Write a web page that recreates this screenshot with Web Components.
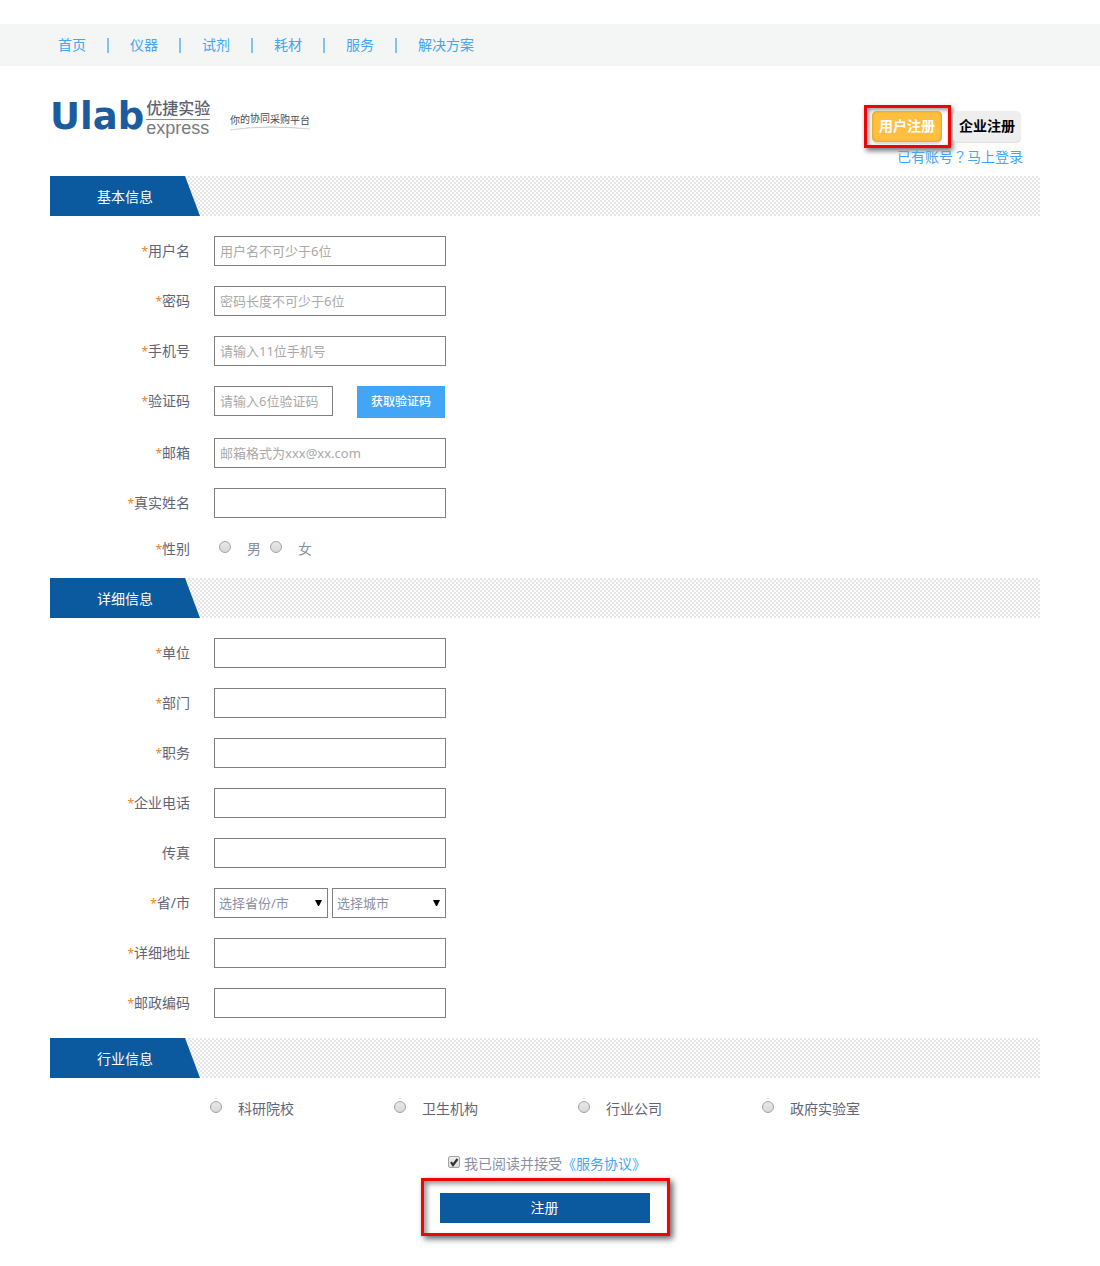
<!DOCTYPE html>
<html lang="zh-CN">
<head>
<meta charset="utf-8">
<meta name="viewport" content="width=device-width, initial-scale=1">
<title>用户注册</title>
<style>
  body { margin: 0; background: #fff; color: #5f6577; font: 14px/20px "Noto Sans", "Noto Sans CJK SC", sans-serif; }
</style>
</head>
<body>
<register-page></register-page>
<script>
const define = (name, html) => customElements.define(name, class extends HTMLElement {
  connectedCallback() {
    if (this.shadowRoot) return;
    const root = this.attachShadow({ mode: "open" });
    root.innerHTML = typeof html === "function" ? html(this) : html;
  }
});

define("site-nav", `
<style>
  :host { display: block; background: #f4f5f5; }
  nav { display: flex; padding: 0 50px; height: 42px; align-items: center; }
  a { color: #42a5f5; text-decoration: none; padding: 0 8px; }
  a + a { display: flex; align-items: center; padding-left: 0; }
  a + a::before { content: ""; width: 2px; height: 15px; margin: 0 21px 0 13px; background: #80c1f8; }
</style>
<nav><a href="#">首页</a><a href="#">仪器</a><a href="#">试剂</a><a href="#">耗材</a><a href="#">服务</a><a href="#">解决方案</a></nav>`);

define("brand-logo", `
<style>
  :host { display: flex; align-items: flex-start; }
  .main { color: #1c5c9e; font: bold 37px/32px "DejaVu Sans", sans-serif; }
  .sub { display: flex; flex-direction: column; color: #5a6270; margin-left: 2px; }
  .cn { font: 500 16px/16px "Liberation Sans", "Noto Sans CJK SC", sans-serif; padding-bottom: 2px; border-bottom: 1px solid #8b9097; }
  .en { font: 18px/16px "Liberation Sans", sans-serif; color: #777b80; }
  svg { margin-left: 20px; }
</style>
<span class="main">Ulab</span>
<span class="sub"><span class="cn">优捷实验</span><span class="en">express</span></span>
<svg width="86" height="34" viewBox="0 0 86 34">
  <text y="23" dy="0 -1 -1 0 1 0 1 0" font-size="10" fill="#444b55">你的协同采购平台</text>
  <path d="M0 29Q36 23 80 28Q36 24 0 29Z" fill="#aaa" stroke="#ccc" stroke-width=".5"/>
</svg>`);

define("account-tabs", `
<style>
  :host { display: flex; flex-direction: column; align-items: flex-end; }
  .tabs { display: flex; align-items: center; }
  .mark { border: 3px solid #f00505; padding: 3px; box-shadow: 2px 3px 5px #0008, inset 2px 2px 4px #0006; }
  button { display: block; width: 70px; height: 31px; padding: 0 0 2px; border: 0; border-radius: 5px; font: bold 14px/29px "Noto Sans", "Noto Sans CJK SC", sans-serif; }
  .on { margin: 0 3px 0 2px; color: #fff; background: #ffc040; box-shadow: inset 0 0 3px #c98b10, 0 2px 1px #ddd; }
  .off { width: 68px; margin-left: 2px; color: #000; background: #eee; box-shadow: 0 1px 1px #ddd; }
  a { color: #42a5f5; text-decoration: none; margin-right: -2px; line-height: 16px; }
  .mid { font-family: "Noto Sans CJK TC", sans-serif; }
</style>
<div class="tabs"><div class="mark"><button class="on" type="button">用户注册</button></div><button class="off" type="button">企业注册</button></div>
<a href="#">已有账号<span class="mid" lang="zh-TW">？</span>马上登录</a>`);

define("form-section", el => `
<style>
  :host { display: block; }
  h2 { margin: 0; height: 40px; font: inherit; color: #fff; background: repeating-conic-gradient(#e6e6e6 0 25%, #fff 0 50%) 0 0 / 4px 4px; }
  h2 span { display: block; width: 150px; line-height: 42px; height: 40px; text-align: center; background: #0b5a9f; clip-path: polygon(0 0, 135px 0, 100% 100%, 0 100%); }
  .body { display: flex; flex-direction: column; gap: 20px; padding: 20px 0; }
</style>
<h2><span>${el.getAttribute("heading")}</span></h2>
<div class="body"><slot></slot></div>`);

const radioCss = `
  input[type=radio] { appearance: none; flex: none; width: 12px; height: 12px; margin: 3px 0 0; border: 1px solid #a3a3a3; border-radius: 50%; background: linear-gradient(#e8e8e8, #d8d8d8); }
  input[type=radio]:checked { background: radial-gradient(#444 35%, #ddd 40%); }`;

const rowCss = `
  :host { display: flex; gap: 24px; }
  .name { width: 140px; line-height: 30px; text-align: right; flex: none; }
  .name i { font-style: normal; font-size: 12px; line-height: 1; color: #f08326; }
  input:not([type=radio]), select { box-sizing: border-box; width: 232px; height: 30px; border: 1px solid #808080; border-radius: 0; background: #fff; color: #8a8fa5; padding: 0 5px; margin: 0; font: 13px/20px "Noto Sans", "Noto Sans CJK SC", sans-serif; outline: 0; }
  ::placeholder { color: #a9a9a9; opacity: 1; }`;
const star = el => el.hasAttribute("optional") ? "" : "<i>*</i>";

define("text-field", el => `
<style>${rowCss}
  .line { display: flex; gap: 24px; }
  .short input { width: 119px; }
  button { width: 88px; height: 32px; padding: 0; border: 0; color: #fff; background: #42a5f5; font: 500 12px/32px "Noto Sans", "Noto Sans CJK SC", sans-serif; }
</style>
<label class="name" for="f">${star(el)}${el.getAttribute("label")}</label>
<div class="line${el.hasAttribute("code") ? " short" : ""}"><input id="f" type="${el.getAttribute("type") || "text"}" placeholder="${el.getAttribute("hint") || ""}">${el.hasAttribute("code") ? '<button type="button">获取验证码</button>' : ""}</div>`);

define("region-field", `
<style>${rowCss}
  .line { display: flex; gap: 4px; }
  select { appearance: none; width: 114px; padding-left: 4px; }
  .pick { display: grid; }
  .pick > * { grid-area: 1 / 1; }
  svg { justify-self: end; align-self: center; margin-right: 6px; pointer-events: none; }
</style>
<label class="name" for="p"><i>*</i>省/市</label>
<div class="line">
  <div class="pick"><select id="p"><option>选择省份/市</option></select><svg width="7" height="6"><path d="M0 0H7L4 6H3Z"/></svg></div>
  <div class="pick"><select aria-label="城市"><option>选择城市</option></select><svg width="7" height="6"><path d="M0 0H7L4 6H3Z"/></svg></div>
</div>`);

define("gender-field", `
<style>${rowCss}${radioCss}
  :host { height: 20px; }
  .name { line-height: 22px; }
  .line { display: flex; align-items: flex-start; gap: 9px; padding-left: 5px; color: #8a8fa5; }
  .line label { display: flex; gap: 16px; line-height: 22px; }
</style>
<span class="name"><i>*</i>性别</span>
<div class="line"><label><input type="radio" name="g">男</label><label><input type="radio" name="g">女</label></div>`);

define("industry-field", `
<style>${radioCss}
  :host { display: grid; grid-template-columns: repeat(4, 184px); padding-left: 160px; }
  label { display: flex; gap: 16px; line-height: 22px; }
</style>
${["科研院校", "卫生机构", "行业公司", "政府实验室"].map(t => `<label><input type="radio" name="i">${t}</label>`).join("")}`);

define("submit-area", `
<style>
  :host { display: flex; flex-direction: column; align-items: center; margin-top: 13px; }
  .agree { display: flex; align-items: center; color: #8a8fa5; line-height: 22px; }
  label { display: flex; align-items: center; gap: 4px; }
  .tick { display: grid; margin: 0 0 4px 4px; }
  .tick > * { grid-area: 1 / 1; }
  input { appearance: none; width: 12px; height: 12px; margin: 0; border: 1px solid #a3a3a3; border-radius: 2px; background: linear-gradient(#eee, #dcdcdc); }
  svg { pointer-events: none; visibility: hidden; }
  input:checked + svg { visibility: visible; }
  a { color: #42a5f5; text-decoration: none; }
  .mark { margin-top: 3px; border: 3px solid #f00505; padding: 12px 17px 10px 16px; box-shadow: 3px 3px 6px #0009, inset 3px 3px 5px #0006; }
  button { display: block; width: 210px; height: 30px; border: 0; padding: 0; color: #fff; background: #0b5a9f; font: 14px/30px "Noto Sans", "Noto Sans CJK SC", sans-serif; }
</style>
<div class="agree"><label><span class="tick"><input type="checkbox" checked><svg width="12" height="12"><path d="M3 6L5 9L9.500 3" fill="none" stroke="#333" stroke-width="2.200"/></svg></span>我已阅读并接受</label><a href="#">《服务协议》</a></div>
<div class="mark"><button type="submit">注册</button></div>`);

define("register-page", `
<style>
  :host { display: block; padding-top: 24px; }
  header { display: flex; justify-content: space-between; align-items: flex-start; margin: 0 60px 0 50px; padding-right: 19px; height: 110px; box-sizing: border-box; }
  brand-logo { margin-top: 35px; }
  account-tabs { margin-top: 39px; }
  main { margin: 0 60px 0 50px; }
  form { padding-bottom: 30px; }
</style>
<site-nav></site-nav>
<header><brand-logo></brand-logo><account-tabs></account-tabs></header>
<main><form>
  <form-section heading="基本信息">
    <text-field label="用户名" hint="用户名不可少于6位"></text-field>
    <text-field label="密码" type="password" hint="密码长度不可少于6位"></text-field>
    <text-field label="手机号" hint="请输入11位手机号"></text-field>
    <text-field label="验证码" hint="请输入6位验证码" code></text-field>
    <text-field label="邮箱" hint="邮箱格式为xxx@xx.com"></text-field>
    <text-field label="真实姓名"></text-field>
    <gender-field></gender-field>
  </form-section>
  <form-section heading="详细信息">
    <text-field label="单位"></text-field>
    <text-field label="部门"></text-field>
    <text-field label="职务"></text-field>
    <text-field label="企业电话"></text-field>
    <text-field label="传真" optional></text-field>
    <region-field></region-field>
    <text-field label="详细地址"></text-field>
    <text-field label="邮政编码"></text-field>
  </form-section>
  <form-section heading="行业信息"><industry-field></industry-field></form-section>
  <submit-area></submit-area>
</form></main>`);
</script>
</body>
</html>
